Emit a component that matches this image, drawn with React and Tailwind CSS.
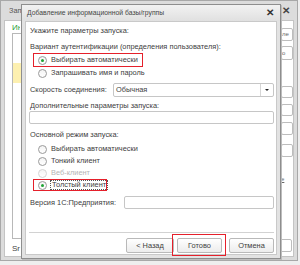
import React from "react";

function Radio({ checked, disabled }) {
  return (
    <span
      className={`inline-flex items-center justify-center w-[9px] h-[9px] rounded-full border ${disabled ? "border-[#d4d4d4]" : "border-[#9a9a9a]"} bg-gradient-to-b from-[#f4f4f4] to-white shrink-0`}
    >
      {checked && <span className="w-[3px] h-[3px] rounded-full bg-[#1fa335]" />}
    </span>
  );
}

function Btn({ children, w }) {
  return (
    <div
      className="h-[15px] flex items-center justify-center rounded-[2px] border border-[#b9b9b9] bg-gradient-to-b from-white to-[#ececec] text-[#404040] whitespace-nowrap"
      style={{ width: w }}
    >
      {children}
    </div>
  );
}

export default function App() {
  return (
    <div
      className="relative w-[300px] h-[265px] bg-[#eeeeee] overflow-hidden text-[7.4px] leading-[12px] whitespace-nowrap"
      style={{ fontFamily: '"Liberation Sans", Arial, sans-serif' }}
    >
      {/* Background window */}
      <div className="w-[298px] h-[261px] border border-[#a8a8a8] bg-[#dcdcdc] flex flex-col px-[3px] pb-[3px]">
        <div className="h-[19px] flex items-center pl-[5px] text-[#555]">
          <div className="w-[13px] overflow-hidden">
            <span>Запуск 1С:Предприятия</span>
          </div>
          <span className="ml-auto mr-[4px] text-[#444] font-bold text-[10px]">✕</span>
        </div>
        <div className="flex-1 bg-white border border-[#c4c4c4] flex">
          <div className="flex flex-col pl-[7px] pt-[1px] w-[270px]">
            <div className="w-[8px] overflow-hidden h-[10px]">
              <span className="text-[#27a03a] leading-[10px] text-[8px]">Информационные базы</span>
            </div>
            <div className="mt-[1px] h-[206px] border border-[#b8b8b8] pt-[29px]">
              <div className="h-[20px] bg-[#fdf0b0]" />
            </div>
            <span className="mt-[4px] text-[#444] text-[8px]">Sr</span>
          </div>
          <div className="flex flex-col gap-0 pl-[6px] pt-[7px]">
            <div className="w-[12px] h-[13px] border border-[#bdbdbd] rounded-[2px] text-[6px] leading-[11px] text-[#666]">ле</div>
            <div className="w-[12px] h-[14px] mt-[5px] border border-[#bdbdbd] rounded-[2px] text-[6px] leading-[12px] text-[#666]">о</div>
            <div className="w-[12px] h-[12px] mt-[26px] border border-[#bdbdbd] rounded-[2px]" />
            <div className="w-[12px] h-[12px] mt-[6px] border border-[#bdbdbd] rounded-[2px]" />
            <div className="w-[12px] h-[13px] mt-[6px] border border-[#bdbdbd] rounded-[2px]" />
            <div className="w-[12px] h-[13px] mt-[9px] border border-[#bdbdbd] rounded-[2px]" />
            <div className="mt-[16px] text-[6px] text-[#666] underline">е</div>
            <div className="w-[14px] h-[13px] mt-[54px] -ml-[3px] border border-[#bdbdbd] rounded-[2px]" />
          </div>
        </div>
      </div>

      {/* Dialog window */}
      <div className="absolute left-[21px] top-[4px] w-[260px] h-[255px] border border-[#8e8e8e] bg-[#e2e2e2] flex flex-col px-[3px] pb-[3px] shadow-[1px_1px_0_#bdbdbd]">
        <div className="h-[16px] flex items-center text-[#454545] bg-gradient-to-b from-[#f2f2f2] to-[#e0e0e0] -mx-[3px] px-[5px]">
          <span className="text-[6.8px]">Добавление информационной базы/группы</span>
          <span className="ml-auto mr-[1px] font-bold text-[#333] text-[10px]">✕</span>
        </div>
        <div className="flex-1 bg-white border border-[#c9c9c9] flex flex-col pl-[3px] pr-[2px] pt-[3px] text-[#404040]">
          <div className="h-[12px] pl-[1px]">Укажите параметры запуска:</div>
          <div className="h-[12px] mt-[4px] pl-[1px]">Вариант аутентификации (определения пользователя):</div>
          <div className="h-[14px] flex items-center ml-[4px] w-[110px] border border-[#e5202b] pl-[4px] gap-[4px]">
            <Radio checked />
            <span>Выбирать автоматически</span>
          </div>
          <div className="h-[12px] flex items-center ml-[4px] pl-[5px] gap-[4px]">
            <Radio />
            <span>Запрашивать имя и пароль</span>
          </div>
          <div className="mt-[4px] h-[14px] flex items-center">
            <span className="pl-[1px] w-[84px]">Скорость соединения:</span>
            <div className="flex-1 h-[14px] border border-[#c6c6c6] rounded-[2px] flex items-center">
              <span className="pl-[2px] flex-1">Обычная</span>
              <div className="w-[13px] h-full border-l border-[#d6d6d6] flex items-center justify-center">
                <span className="w-0 h-0 border-l-[2px] border-r-[2px] border-t-[2px] border-l-transparent border-r-transparent border-t-[#222]" />
              </div>
            </div>
          </div>
          <div className="mt-[3px] h-[11px] leading-[11px] pl-[1px]">Дополнительные параметры запуска:</div>
          <div className="h-[13px] border border-[#c6c6c6] rounded-[2px]" />
          <div className="mt-[5px] h-[12px] pl-[1px]">Основной режим запуска:</div>
          <div className="mt-[2px] flex flex-col">
            <div className="h-[12px] flex items-center ml-[4px] pl-[5px] gap-[4px]">
              <Radio />
              <span>Выбирать автоматически</span>
            </div>
            <div className="h-[12px] flex items-center ml-[4px] pl-[5px] gap-[4px]">
              <Radio />
              <span>Тонкий клиент</span>
            </div>
            <div className="h-[12px] flex items-center ml-[4px] pl-[5px] gap-[4px]">
              <Radio disabled />
              <span className="text-[#b4b4b4]">Веб-клиент</span>
            </div>
            <div className="h-[12px] flex items-center ml-[4px] w-[74px] border border-[#e5202b] pl-[4px] gap-[4px]">
              <Radio checked />
              <span className="border border-dotted border-[#555] leading-[8px] px-[1px] -ml-[1px]">Толстый клиент</span>
            </div>
          </div>
          <div className="mt-[5px] h-[13px] flex items-center">
            <span className="pl-[1px] w-[95px]">Версия 1С:Предприятия:</span>
            <div className="flex-1 h-[13px] border border-[#c6c6c6] rounded-[2px]" />
          </div>
          <div className="mt-[23px] h-px bg-[#d2d2d2]" />
          <div className="mt-[5px] flex items-center pl-[97px]">
            <Btn w="48px">&lt; Назад</Btn>
            <div className="relative ml-[3px]">
              <div className="absolute -left-[5px] -right-[4px] -top-[4px] -bottom-[3px] border border-[#e5202b]" />
              <Btn w="45px">Готово</Btn>
            </div>
            <div className="ml-[7px]">
              <Btn w="45px">Отмена</Btn>
            </div>
          </div>
        </div>
      </div>
    </div>
  );
}
